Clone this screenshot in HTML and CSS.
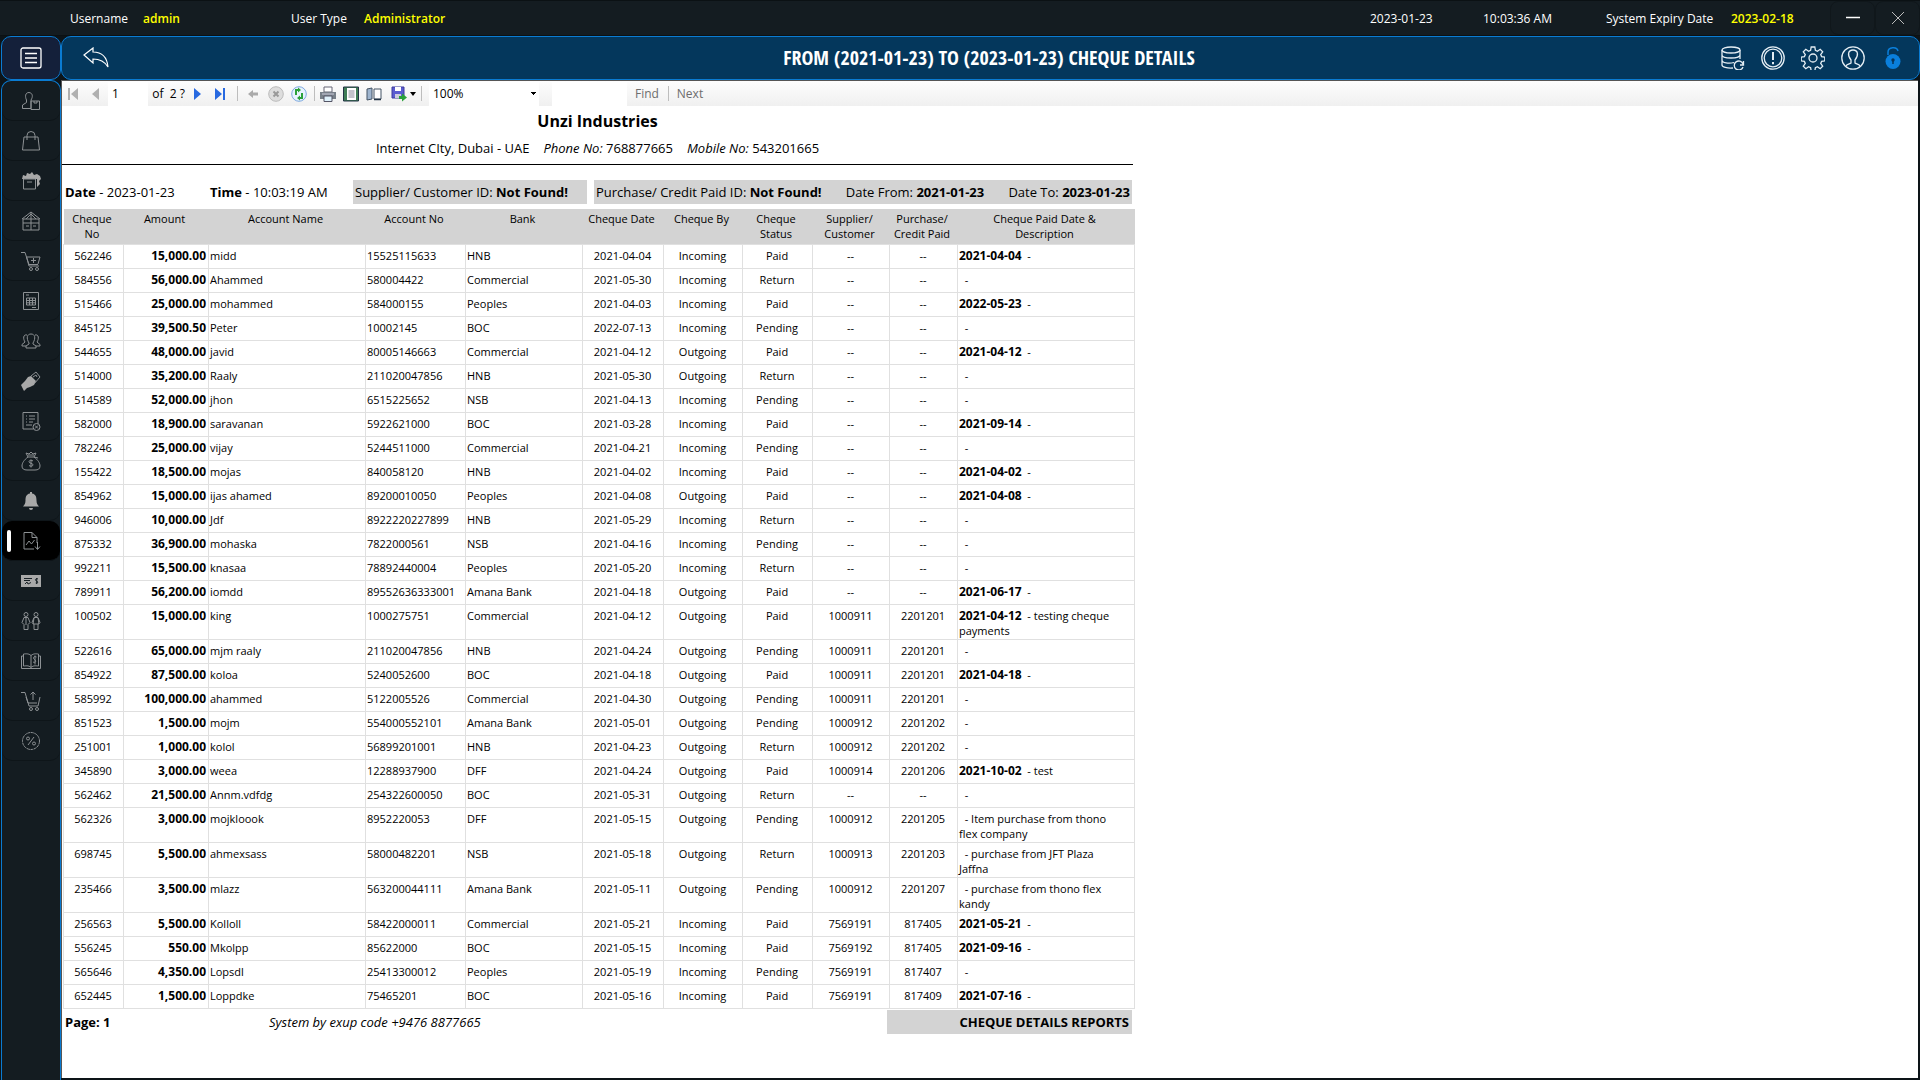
FILE: index.html
```html
<!DOCTYPE html>
<html lang="en">
<head>
<meta charset="utf-8">
<title>Cheque Details</title>
<link rel="stylesheet" href="styles.css">
</head>
<body>
<div class="app">
  <header class="topbar">
    <span class="label user-label">Username</span><span class="value user-value">admin</span>
    <span class="label type-label">User Type</span><span class="value">Administrator</span>
    <span class="label date">2023-01-23</span><span class="label clock">10:03:36 AM</span>
    <span class="label expiry">System Expiry Date</span><span class="value expiry-value">2023-02-18</span>
    <button class="win" aria-label="Minimize"><svg width="14" height="14" viewBox="0 0 14 14"><path d="M0 6.5h14" stroke="#fff" stroke-width="1.5"/></svg></button>
    <button class="win" aria-label="Close"><svg width="14" height="14" viewBox="0 0 14 14"><path d="M1 1l12 12M13 1L1 13" stroke="#bbb"/></svg></button>
  </header>
  <div class="body">
    <div class="side">
      <button class="menu" aria-label="Menu"><svg width="22" height="22" viewBox="0 0 22 22" fill="none" stroke="#fff"><rect x="1" y="1" width="20" height="20" rx="2" stroke-width="1.3"/><path d="M5 6.500h12M5 11h12M5 15.500h12" stroke-width="1.3"/></svg></button>
      <nav class="nav">
        <a href="#" aria-label="Suppliers"><svg viewBox="0 0 20 20"><path d="M10 13V9c2-3 2-7-2-7.500C4 1.500 4 6 5.500 9v2.500L1.500 14v3.500H10zM10 10h8.500v8.500H10zM13 10v2h3v-2"/></svg></a>
        <a href="#" aria-label="Purchases"><svg viewBox="0 0 20 20"><path d="M3 6h14l1.500 13h-17zM6 9V4.500a4 4 0 0 1 8 0V9"/></svg></a>
        <a href="#" aria-label="Products"><svg viewBox="0 0 20 20"><path class="f" d="M1 8l1-4 3 1 1-3 3 1 2-2 2 3 3-1 3 2 1 3-2 2 1 3-3 3V8z"/><path d="M2.500 8h12v10h-12zM6 11h5"/></svg></a>
        <a href="#" aria-label="Warehouse"><svg viewBox="0 0 20 20"><path d="M1 8l9-7 9 7M2 8v11h16V8zM10 1v18M2 12h16M5 15h3M12 15h3M5 8l5-5 5 5"/></svg></a>
        <a href="#" aria-label="Sales"><svg viewBox="0 0 20 20"><path d="M0 1.500h4l4 12h9M5.500 6H19l-2 7M10 9.500h5M12.500 7v5M5.500 6L8 15h10"/><circle cx="10" cy="18" r="1.500"/><circle cx="16" cy="18" r="1.500"/></svg></a>
        <a href="#" aria-label="Calculator"><svg viewBox="0 0 20 20"><path d="M2.500 1.500h15v17h-15zM5.500 7h9v7h-9zM5.500 9.500h9M5.500 11.800h9M8.500 7v7M11.500 7v7M5 4h3M11 16.500h4"/></svg></a>
        <a href="#" aria-label="Customers"><svg viewBox="0 0 20 20"><path d="M8 12c-3-5-2-9 2-9s5 4 2 9v1l3 2v2H5v-2l3-2zM6 4C2 3 2 8 4 11l-3 2.500V15h4M14 4c4-1 4 4 2 7l3 2.500V15h-4"/></svg></a>
        <a href="#" aria-label="Payments"><svg viewBox="0 0 20 20"><path class="f" d="M0 14l4-4 3-4 3-1 5 5-2 4-4 2-3 1-3 3z"/><path d="M10 5l5-4 4 5-6 7M12 6l3-2 1 2"/></svg></a>
        <a href="#" aria-label="Invoices"><svg viewBox="0 0 20 20"><path d="M12 18H2V1.500h15V13M5 5h1M8 5h6M5 8h1M8 8h6M5 11h1M8 11h4M5 14h6"/><circle cx="15.500" cy="16" r="3.500"/><path d="M14 14.500l3 3M17 14.500l-3 3"/></svg></a>
        <a href="#" aria-label="Funds"><svg viewBox="0 0 20 20"><path d="M7 6C3 9 1 12 1 15c0 3 2 4 5 4h8c3 0 5-1 5-4 0-3-2-6-6-9zM7 6L5 2l3 1 2-2 2 2 3-1-2 4M7 4h6M13 6l4 1"/><path d="M12 10c-1-1-4-1-4 .7 0 2 4 1.100 4 3.200 0 1.600-3 1.600-4 .6M10 8.500v8"/></svg></a>
        <a href="#" aria-label="Notifications"><svg viewBox="0 0 20 20"><path class="f" d="M9 1h2v1.500c4 .5 4.500 4 4.500 7 0 3 1 4 2.500 6H2c1.500-2 2.500-3 2.500-6 0-3 .5-6.500 4.500-7zM8 17h4a2 2 0 0 1-4 0z"/></svg></a>
        <a href="#" class="active" aria-label="Reports"><svg viewBox="0 0 20 20"><path d="M13 18H3V1.500h8l5 5V12M11 1.500v5h5M5 14l3-4 2.500 3 3-4M16.500 11v7M14 15.500l2.500 3 2.500-3"/></svg></a>
        <a href="#" aria-label="Cheques"><svg viewBox="0 0 20 20"><path class="f" d="M0 4h20v12H0z"/><path d="M3 7.500h8M3 9.500h6M4 13l2-2 1 2 3-1.500M17 8c-3-1.500-3 2-1.500 2s2 3-.8 2M15.700 7v6" stroke="#182025"/></svg></a>
        <a href="#" aria-label="Staff"><svg viewBox="0 0 20 20"><circle cx="5" cy="3.500" r="2"/><circle cx="15" cy="3.500" r="2"/><path d="M3 6.500h4l2 5-2 2v5H3v-5l-2-2zM5 7v7M13 6.500h4l2 5-2 2v5h-4v-5l-2-2zM13 7l-1 6h6l-1-6"/></svg></a>
        <a href="#" aria-label="Ledger"><svg viewBox="0 0 20 20"><path d="M10 4.500C7 2 4 3 2.500 3v12c2 0 5-1 7.500 1.500C12.500 14 15.500 15 17.500 15V3C16 3 13 2 10 4.500zM10 4.500v12M2.500 5H.5v12.500h19V5h-2M15.500 6c-3-1.500-4 1.500-2 2.500s1.500 4-1.500 2.500M14 4.500v9"/></svg></a>
        <a href="#" aria-label="Orders"><svg viewBox="0 0 20 20"><path d="M0 1.500h4L8 15h9l2-9M5 6l2 6h9M12 9V1M9.500 3.500L12 1l2.500 2.500"/><circle cx="10" cy="18" r="1.500"/><circle cx="16" cy="18" r="1.500"/></svg></a>
        <a href="#" aria-label="Discounts"><svg viewBox="0 0 20 20"><circle cx="10" cy="10" r="8.500" stroke-dasharray="3 .6"/><path d="M13 6l-6 8"/><circle cx="7" cy="7.500" r="1.500"/><circle cx="13" cy="12.500" r="1.500"/></svg></a>
      </nav>
    </div>
    <main class="main">
      <div class="titlebar">
        <button class="back" aria-label="Back"><svg width="26" height="22" viewBox="0 0 26 22" fill="none" stroke="#fff" stroke-width="1.200"><path d="M1 8L10 1v4c9 0 14 5 15 15-3-5-7-8-15-8v4z"/></svg></button>
        <h1>FROM (2021-01-23) TO (2023-01-23) CHEQUE DETAILS</h1>
        <div class="tools">
          <button aria-label="Backup"><svg viewBox="0 0 24 24"><ellipse cx="10" cy="4" rx="9" ry="3"/><path d="M1 4v15c0 2 5 3.500 11 3M19 4v9M1 9c0 4 18 4 18 0M1 14c0 3 7 4 12 2.500M22.500 15v4h-3.500M22 18a4.500 4.500 0 1 0 0 3"/></svg></button>
          <button aria-label="Information"><svg viewBox="0 0 24 24"><circle cx="12" cy="12" r="11.200"/><circle cx="12" cy="12" r="8.800"/><path d="M12 6v8M12 16v2.300" stroke-width="2"/></svg></button>
          <button aria-label="Settings"><svg viewBox="0 0 24 24"><circle cx="12" cy="12" r="4"/><path d="M10.200 1h3.600l.6 3.400 2 .9 2.800-2 2.500 2.500-2 2.800.9 2 3.200.6v3.600l-3.200.6-.9 2 2 2.800-2.500 2.500-2.800-2-2 .9-.6 3.400h-3.600l-.6-3.400-2-.9-2.800 2-2.500-2.500 2-2.800-.9-2-3.200-.6v-3.600l3.200-.6.9-2-2-2.800 2.500-2.500 2.800 2 2-.9z"/></svg></button>
          <button aria-label="Profile"><svg viewBox="0 0 24 24"><circle cx="12" cy="12" r="11.200"/><path d="M5 20c1-2 4-2 5-3v-3C6 9 7 4 12 4s6 5 2 10v3c1 1 4 1 5 3"/></svg></button>
          <button aria-label="Unlock"><svg viewBox="0 0 24 24"><path d="M7 9V6c0-5 9-6 10-1" stroke="#0a7fdc" stroke-width="1.500"/><circle cx="12" cy="15.500" r="7.500" fill="#0a7fdc" stroke="none"/><path d="M12 14v4" stroke="#06345a" stroke-width="1.500"/><circle cx="12" cy="14" r="1.700" fill="#06345a" stroke="none"/></svg></button>
        </div>
      </div>
      <div class="viewer">
        <div class="toolbar">
          <button class="step" aria-label="First page"><svg viewBox="0 0 16 16" fill="#b0b0b0"><path d="M3 2h2v12H3zM13 2v12L6 8z"/></svg></button>
          <button class="step" aria-label="Previous page"><svg viewBox="0 0 16 16" fill="#b0b0b0"><path d="M12 2v12L5 8z"/></svg></button>
          <input class="page" type="text" value="1" aria-label="Page number">
          <span class="of">of&nbsp; 2 ?</span>
          <button aria-label="Next page"><svg viewBox="0 0 16 16" fill="#2869e0"><path d="M5 2v12l7-6z"/></svg></button>
          <button aria-label="Last page"><svg viewBox="0 0 16 16" fill="#2869e0"><path d="M3 2v12l7-6zM11 2h2v12h-2z"/></svg></button>
          <i class="sep"></i>
          <button aria-label="Go back"><svg viewBox="0 0 16 16" fill="#aaa"><path d="M3 8l5-4v2.500h5v3H8V12z"/></svg></button>
          <button aria-label="Stop"><svg viewBox="0 0 16 16"><circle cx="8" cy="8" r="7.300" fill="#ddd" stroke="#bbb"/><path d="M5.500 5.500l5 5M10.500 5.500l-5 5" stroke="#999" stroke-width="2"/></svg></button>
          <button aria-label="Refresh"><svg viewBox="0 0 16 16"><circle cx="8" cy="8" r="7.300" fill="#e6f2ff" stroke="#7fa9df"/><path d="M7 4H5v5M9 12h2V7" fill="none" stroke="#2aa13a" stroke-width="2"/><path d="M7 1.500v5L10 4zM9 9.500v5L6 12z" fill="#2aa13a"/></svg></button>
          <i class="sep tight"></i>
          <button aria-label="Print"><svg viewBox="0 0 16 16"><path d="M4 1h8v5H4z" fill="#fff" stroke="#667"/><path d="M0 6h16v7H0z" fill="#788089"/><path d="M2 8h12" stroke="#ccd"/><path d="M4 10h8v5.500H4z" fill="#dff1fb" stroke="#556"/></svg></button>
          <button aria-label="Print layout"><svg viewBox="0 0 16 16"><path d="M.5 1h15v14H.5z" fill="#3f7d56" stroke="#234"/><path d="M4 2h9v12H4z" fill="#fff"/><path d="M5.500 5h6M5.500 7h6M5.500 9h6M5.500 11h6" stroke="#889"/></svg></button>
          <button aria-label="Page setup"><svg viewBox="0 0 16 16"><path d="M1 3l5-1v11l-5 1z" fill="#9fb5cf" stroke="#456"/><path d="M8 3h7v10H8z" fill="#fff" stroke="#456"/><path d="M8 13.500h7" stroke="#234" stroke-width="1.500"/></svg></button>
          <button class="save" aria-label="Export"><svg viewBox="0 0 16 16"><path d="M1 1h12v11H1z" fill="#5a5bd0" stroke="#3a3a9c"/><path d="M4 1h6v4H4z" fill="#fff"/><path d="M4 8h6v4H4z" fill="#ccd"/><path d="M8 10h3V7.500l5 4-5 4V13H8z" fill="#2aa13a"/></svg><svg class="caret" viewBox="0 0 6 4"><path d="M0 0h6L3 4z"/></svg></button>
          <i class="sep wide"></i>
          <select class="zoom" aria-label="Zoom"><option>100%</option></select>
          <input class="search" type="text" aria-label="Find text">
          <button class="txt">Find</button><i class="sep find-sep"></i><button class="txt">Next</button>
        </div>
        <article class="report">
          <h2>Unzi Industries</h2>
          <p class="address"><span>Internet CIty, Dubai - UAE</span><span><em>Phone No:</em> 768877665</span><span><em>Mobile No:</em> 543201665</span></p>
          <div class="meta">
            <span><b>Date</b> - 2023-01-23</span>
            <span><b>Time</b> - 10:03:19 AM</span>
            <span class="box">Supplier/ Customer ID: <b>Not Found!</b></span>
            <span class="box range"><span>Purchase/ Credit Paid ID: <b>Not Found!</b></span><span>Date From: <b>2021-01-23</b></span><span>Date To: <b>2023-01-23</b></span></span>
          </div>
          <table>
            <colgroup><col class="c-no"><col class="c-amt"><col class="c-name"><col class="c-acc"><col class="c-bank"><col class="c-date"><col class="c-by"><col class="c-st"><col class="c-sup"><col class="c-pur"><col class="c-desc"></colgroup>
            <thead><tr><th>Cheque<br>No</th><th>Amount</th><th>Account Name</th><th>Account No</th><th>Bank</th><th>Cheque Date</th><th>Cheque By</th><th>Cheque<br>Status</th><th>Supplier/<br>Customer</th><th>Purchase/<br>Credit Paid</th><th>Cheque Paid Date &amp;<br>Description</th></tr></thead>
            <tbody>
<tr><td>562246<td>15,000.00<td>midd<td>15525115633<td>HNB<td>2021-04-04<td>Incoming<td>Paid<td>--<td>--<td><b>2021-04-04</b>&nbsp; -</tr>
<tr><td>584556<td>56,000.00<td>Ahammed<td>580004422<td>Commercial<td>2021-05-30<td>Incoming<td>Return<td>--<td>--<td>&nbsp; -</tr>
<tr><td>515466<td>25,000.00<td>mohammed<td>584000155<td>Peoples<td>2021-04-03<td>Incoming<td>Paid<td>--<td>--<td><b>2022-05-23</b>&nbsp; -</tr>
<tr><td>845125<td>39,500.50<td>Peter<td>10002145<td>BOC<td>2022-07-13<td>Incoming<td>Pending<td>--<td>--<td>&nbsp; -</tr>
<tr><td>544655<td>48,000.00<td>javid<td>80005146663<td>Commercial<td>2021-04-12<td>Outgoing<td>Paid<td>--<td>--<td><b>2021-04-12</b>&nbsp; -</tr>
<tr><td>514000<td>35,200.00<td>Raaly<td>211020047856<td>HNB<td>2021-05-30<td>Outgoing<td>Return<td>--<td>--<td>&nbsp; -</tr>
<tr><td>514589<td>52,000.00<td>jhon<td>6515225652<td>NSB<td>2021-04-13<td>Incoming<td>Pending<td>--<td>--<td>&nbsp; -</tr>
<tr><td>582000<td>18,900.00<td>saravanan<td>5922621000<td>BOC<td>2021-03-28<td>Incoming<td>Paid<td>--<td>--<td><b>2021-09-14</b>&nbsp; -</tr>
<tr><td>782246<td>25,000.00<td>vijay<td>5244511000<td>Commercial<td>2021-04-21<td>Incoming<td>Pending<td>--<td>--<td>&nbsp; -</tr>
<tr><td>155422<td>18,500.00<td>mojas<td>840058120<td>HNB<td>2021-04-02<td>Incoming<td>Paid<td>--<td>--<td><b>2021-04-02</b>&nbsp; -</tr>
<tr><td>854962<td>15,000.00<td>ijas ahamed<td>89200010050<td>Peoples<td>2021-04-08<td>Outgoing<td>Paid<td>--<td>--<td><b>2021-04-08</b>&nbsp; -</tr>
<tr><td>946006<td>10,000.00<td>Jdf<td>8922220227899<td>HNB<td>2021-05-29<td>Incoming<td>Return<td>--<td>--<td>&nbsp; -</tr>
<tr><td>875332<td>36,900.00<td>mohaska<td>7822000561<td>NSB<td>2021-04-16<td>Incoming<td>Pending<td>--<td>--<td>&nbsp; -</tr>
<tr><td>992211<td>15,500.00<td>knasaa<td>78892440004<td>Peoples<td>2021-05-20<td>Incoming<td>Return<td>--<td>--<td>&nbsp; -</tr>
<tr><td>789911<td>56,200.00<td>iomdd<td>89552636333001<td>Amana Bank<td>2021-04-18<td>Outgoing<td>Paid<td>--<td>--<td><b>2021-06-17</b>&nbsp; -</tr>
<tr><td>100502<td>15,000.00<td>king<td>1000275751<td>Commercial<td>2021-04-12<td>Outgoing<td>Paid<td>1000911<td>2201201<td><b>2021-04-12</b>&nbsp; - testing cheque<br>payments</tr>
<tr><td>522616<td>65,000.00<td>mjm raaly<td>211020047856<td>HNB<td>2021-04-24<td>Outgoing<td>Pending<td>1000911<td>2201201<td>&nbsp; -</tr>
<tr><td>854922<td>87,500.00<td>koloa<td>5240052600<td>BOC<td>2021-04-18<td>Outgoing<td>Paid<td>1000911<td>2201201<td><b>2021-04-18</b>&nbsp; -</tr>
<tr><td>585992<td>100,000.00<td>ahammed<td>5122005526<td>Commercial<td>2021-04-30<td>Outgoing<td>Pending<td>1000911<td>2201201<td>&nbsp; -</tr>
<tr><td>851523<td>1,500.00<td>mojm<td>554000552101<td>Amana Bank<td>2021-05-01<td>Outgoing<td>Pending<td>1000912<td>2201202<td>&nbsp; -</tr>
<tr><td>251001<td>1,000.00<td>kolol<td>56899201001<td>HNB<td>2021-04-23<td>Outgoing<td>Return<td>1000912<td>2201202<td>&nbsp; -</tr>
<tr><td>345890<td>3,000.00<td>weea<td>12288937900<td>DFF<td>2021-04-24<td>Outgoing<td>Paid<td>1000914<td>2201206<td><b>2021-10-02</b>&nbsp; - test</tr>
<tr><td>562462<td>21,500.00<td>Annm.vdfdg<td>254322600050<td>BOC<td>2021-05-31<td>Outgoing<td>Return<td>--<td>--<td>&nbsp; -</tr>
<tr><td>562326<td>3,000.00<td>mojkloook<td>8952220053<td>DFF<td>2021-05-15<td>Outgoing<td>Pending<td>1000912<td>2201205<td>&nbsp; - Item purchase from thono<br>flex company</tr>
<tr><td>698745<td>5,500.00<td>ahmexsass<td>58000482201<td>NSB<td>2021-05-18<td>Outgoing<td>Return<td>1000913<td>2201203<td>&nbsp; - purchase from JFT Plaza<br>Jaffna</tr>
<tr><td>235466<td>3,500.00<td>mlazz<td>563200044111<td>Amana Bank<td>2021-05-11<td>Outgoing<td>Pending<td>1000912<td>2201207<td>&nbsp; - purchase from thono flex<br>kandy</tr>
<tr><td>256563<td>5,500.00<td>Kolloll<td>58422000011<td>Commercial<td>2021-05-21<td>Incoming<td>Paid<td>7569191<td>817405<td><b>2021-05-21</b>&nbsp; -</tr>
<tr><td>556245<td>550.00<td>Mkolpp<td>85622000<td>BOC<td>2021-05-15<td>Incoming<td>Paid<td>7569192<td>817405<td><b>2021-09-16</b>&nbsp; -</tr>
<tr><td>565646<td>4,350.00<td>Lopsdl<td>25413300012<td>Peoples<td>2021-05-19<td>Incoming<td>Pending<td>7569191<td>817407<td>&nbsp; -</tr>
<tr><td>652445<td>1,500.00<td>Loppdke<td>75465201<td>BOC<td>2021-05-16<td>Incoming<td>Paid<td>7569191<td>817409<td><b>2021-07-16</b>&nbsp; -</tr>
            </tbody>
          </table>
          <footer><b>Page: 1</b><em>System by exup code +9476 8877665</em><b class="tag">CHEQUE DETAILS REPORTS</b></footer>
        </article>
      </div>
    </main>
  </div>
</div>
</body>
</html>
```
FILE: styles.css
```css
* { box-sizing: border-box; }
body { margin: 0; background: #0d1418; font-family: "Open Sans", "Noto Sans", sans-serif; font-size: 12px; color: #000; }
button { border: 0; padding: 0; background: none; font: inherit; display: flex; align-items: center; justify-content: center; }
.app { min-height: 100vh; display: flex; flex-direction: column; }

.topbar { height: 36px; padding-left: 70px; display: flex; align-items: center; background: #141c21; border-top: 1px solid #0b1114; border-bottom: 1px solid #0b1114; white-space: nowrap; }
.label { color: #fff; }
.value { color: #ff0; font-weight: 600; }
.user-label { width: 73px; }
.user-value { width: 148px; }
.type-label { width: 73px; }
.date { margin-left: auto; width: 113px; }
.clock { width: 123px; }
.expiry { width: 125px; }
.expiry-value { width: 99px; }
.win { width: 45px; height: 34px; border: 1px solid #10171b; border-radius: 8px; }

.body { flex: 1; display: flex; }
.side { width: 61px; padding-left: 1px; display: flex; flex-direction: column; }
.menu { height: 44px; background: #14203a; border: 1px solid #0a7bd2; border-radius: 10px; }
.nav { flex: 1; background: #141c21; border: solid #0a7bd2; border-width: 1px 1px 0; border-radius: 10px 10px 0 0; }
.nav a { height: 40px; display: flex; align-items: center; justify-content: center; border-bottom: 1px solid #0e1519; border-radius: 10px; position: relative; }
.nav svg { width: 20px; height: 20px; fill: none; stroke: #8d9194; }
.nav .f { fill: #a8a8a8; stroke: none; }
.nav .active { background: #000; }
.nav .active::before { content: ""; position: absolute; left: 5px; top: 9px; width: 4px; height: 22px; border-radius: 2px; background: #fff; }

.main { flex: 1; display: flex; flex-direction: column; min-width: 0; }
.titlebar { height: 44px; display: flex; align-items: center; justify-content: space-between; background: #04375c; border: 1px solid #0a7bd2; border-radius: 10px; padding: 0 14px 0 21px; }
.titlebar h1 { margin: 0; color: #fff; font: bold 20px/42px "Open Sans Condensed", "Liberation Sans Narrow", "Liberation Sans", sans-serif; padding-left: 148px; white-space: nowrap; }
.tools { display: flex; gap: 16px; }
.tools svg { width: 24px; height: 24px; fill: none; stroke: #e4edf3; stroke-width: 1.300; }

.viewer { flex: 1; background: #fff; border-top: 1px solid #555; border-left: 1px solid #555; margin: 0 2px 2px 0; }
.toolbar { height: 25px; display: flex; align-items: center; background: linear-gradient(#fdfdfd, #f0f0f0); }
.toolbar button { width: 23px; height: 24px; }
.toolbar .step { width: 22px; }
.toolbar svg { width: 16px; height: 16px; }
.toolbar input { border: 0; background: #fff; height: 24px; font: inherit; font-size: 12px; padding: 0 4px; }
.toolbar .page { width: 40px; margin-left: 2px; }
.of { width: 37px; text-align: right; white-space: nowrap; }
.sep { width: 1px; height: 15px; background: #bdbdbd; margin: 0 3px 0 6px; }
.sep.tight { margin: 0 1px 0 4px; }
.toolbar .save { width: 36px; gap: 3px; }
.toolbar .caret { width: 6px; height: 4px; }
.sep.wide { margin: 0 7px 0 0; }
.zoom { width: 110px; height: 24px; border: 0; padding: 0 4px; font: inherit; appearance: none; color: #000; background: linear-gradient(#000, #000) 102px 10px / 5px 1px no-repeat, linear-gradient(#000, #000) 103px 11px / 3px 1px no-repeat, linear-gradient(#000, #000) 104px 12px / 1px 1px no-repeat, #fff; }
.toolbar .search { width: 75px; margin: 0 4px 0 13px; }
.toolbar .txt { width: 32px; color: #6d6d6d; }
.sep.find-sep { margin: 0 5px; }

.report { width: 1071px; font-size: 13px; }
.report h2 { margin: 0; padding-top: 3px; text-align: center; font-size: 16px; line-height: 24px; }
.address { margin: 0; height: 32px; border-bottom: 1px solid #000; display: flex; justify-content: center; gap: 14px; line-height: 30px; }
.meta { display: grid; grid-template-columns: 145px 143px 234px 1fr; padding: 15px 1px 0 3px; line-height: 24px; white-space: nowrap; }
.box { background: #d3d3d3; padding: 0 2px; }
.range { margin-left: 7px; display: flex; justify-content: space-between; }

table { table-layout: fixed; width: 1071px; margin: 5px 0 0 1px; border-collapse: collapse; font-size: 11px; line-height: 15px; }
.c-no { width: 60px; } .c-amt { width: 85px; } .c-name { width: 157px; } .c-acc { width: 100px; } .c-bank { width: 117px; }
.c-date { width: 81px; } .c-by { width: 79px; } .c-st { width: 70px; } .c-sup { width: 77px; } .c-pur { width: 68px; } .c-desc { width: 177px; }
th { height: 35px; background: #d3d3d3; font-weight: 400; vertical-align: top; padding: 2px 3px 2px 0; white-space: nowrap; }
td { height: 24px; padding: 3px 2px 1px 1px; border: 1px solid #e0e0e0; vertical-align: top; text-align: center; white-space: nowrap; }
td:nth-child(2) { text-align: right; font-weight: 700; font-size: 12px; }
td:nth-child(3), td:nth-child(4), td:nth-child(5), td:nth-child(11) { text-align: left; }
td b { font-size: 12px; line-height: 14px; }
footer { display: grid; grid-template-columns: 204px 1fr 245px; padding: 1px 1px 0 3px; line-height: 24px; }
.tag { background: #d3d3d3; text-align: right; padding-right: 3px; }
```
